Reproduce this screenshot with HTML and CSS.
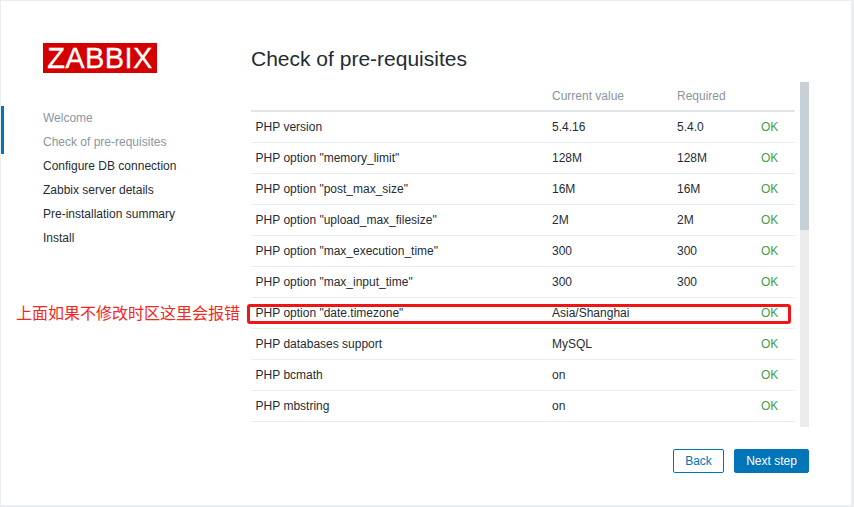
FILE: index.html
```html
<!DOCTYPE html>
<html lang="en">

<head>
    <meta charset="UTF-8">
    <meta name="viewport" content="width=device-width, initial-scale=1.0">
    <title>Zabbix - Check of pre-requisites</title>
    <link rel="stylesheet" href="styles.css">
</head>

<body>
    <div class="container">
        <div class="sidebar">
            <div class="logo">ZABBIX</div>
            <ul class="steps">
                <li class="done">Welcome</li>
                <li class="done">Check of pre-requisites</li>
                <li>Configure DB connection</li>
                <li>Zabbix server details</li>
                <li>Pre-installation summary</li>
                <li>Install</li>
            </ul>
        </div>
        <div class="content">
            <h1>Check of pre-requisites</h1>
            <div class="scroll-area">
                <table class="checks">
                    <thead>
                        <tr>
                            <th></th>
                            <th>Current value</th>
                            <th>Required</th>
                            <th></th>
                        </tr>
                    </thead>
                    <tbody>
                        <tr><td>PHP version</td><td>5.4.16</td><td>5.4.0</td><td class="ok">OK</td></tr>
                        <tr><td>PHP option "memory_limit"</td><td>128M</td><td>128M</td><td class="ok">OK</td></tr>
                        <tr><td>PHP option "post_max_size"</td><td>16M</td><td>16M</td><td class="ok">OK</td></tr>
                        <tr><td>PHP option "upload_max_filesize"</td><td>2M</td><td>2M</td><td class="ok">OK</td></tr>
                        <tr><td>PHP option "max_execution_time"</td><td>300</td><td>300</td><td class="ok">OK</td></tr>
                        <tr><td>PHP option "max_input_time"</td><td>300</td><td>300</td><td class="ok">OK</td></tr>
                        <tr><td>PHP option "date.timezone"</td><td>Asia/Shanghai</td><td></td><td class="ok">OK</td></tr>
                        <tr><td>PHP databases support</td><td>MySQL</td><td></td><td class="ok">OK</td></tr>
                        <tr><td>PHP bcmath</td><td>on</td><td></td><td class="ok">OK</td></tr>
                        <tr><td>PHP mbstring</td><td>on</td><td></td><td class="ok">OK</td></tr>
                    </tbody>
                </table>
                <div class="scrollbar">
                    <div class="thumb"></div>
                </div>
            </div>
            <div class="buttons">
                <button class="btn-alt">Back</button>
                <button class="btn-next">Next step</button>
            </div>
        </div>
        <div class="note">上面如果不修改时区这里会报错</div>
        <div class="note-box"></div>
    </div>
</body>

</html>
```

FILE: styles.css
```css
* {
    box-sizing: border-box;
}

html,
body {
    height: 100%;
}

body {
    margin: 0;
    padding: 1px 3px 2px 1px;
    background-color: #ebeef0;
    font-family: "Liberation Sans", Arial, sans-serif;
    font-size: 12px;
    color: #1f2c33;
}

.container {
    position: relative;
    display: flex;
    height: 504px;
    background: white;
    overflow: hidden;
}

.sidebar {
    width: 250px;
    padding-top: 42px;
}

.logo {
    width: 114px;
    height: 30px;
    margin-left: 42px;
    background: #d40000;
    color: white;
    font-size: 29px;
    line-height: 30px;
    text-align: center;
    letter-spacing: 0.4px;
    -webkit-text-stroke: 0.3px white;
}

.steps {
    list-style: none;
    margin: 33px 0 0;
    padding: 0;
}

.steps li {
    height: 24px;
    line-height: 24px;
    padding-left: 42px;
}

.steps .done {
    color: #8a96a0;
    border-left: 3px solid #0275b8;
    padding-left: 39px;
}

.content {
    width: 558px;
}

h1 {
    margin: 0;
    height: 81px;
    padding-top: 45px;
    font-size: 21px;
    line-height: 26px;
    font-weight: normal;
}

.scroll-area {
    display: flex;
    justify-content: space-between;
    height: 345px;
    overflow: hidden;
}

.checks {
    width: 544px;
    border-collapse: collapse;
    table-layout: fixed;
    align-self: flex-start;
}

.checks th {
    height: 29px;
    padding: 0 4px;
    text-align: left;
    font-weight: normal;
    color: #8a96a0;
    border-bottom: 2px solid #dfe4e7;
}

.checks th:first-child {
    width: 297px;
}

.checks th:nth-child(2) {
    width: 125px;
}

.checks th:nth-child(3) {
    width: 83px;
}

.checks td {
    height: 31px;
    padding: 0 4px;
    border-bottom: 1px solid #ebeef0;
}

.checks td:first-child {
    padding-left: 4.6px;
}

.checks .ok {
    color: #429e47;
    padding-left: 5px;
}

.scrollbar {
    width: 9px;
    height: 345px;
    margin-right: 0;
    background: #ebebeb;
}

.thumb {
    height: 148px;
    background: #c5d0d7;
}

.buttons {
    display: flex;
    justify-content: flex-end;
    gap: 10px;
    margin-top: 22px;
}

.buttons button {
    height: 24px;
    padding: 0;
    border-radius: 2px;
    font-family: inherit;
    font-size: 12px;
    cursor: pointer;
}

.btn-alt {
    width: 51px;
    background: white;
    color: #0275b8;
    border: 1px solid #0275b8;
}

.btn-next {
    width: 75px;
    background: #0275b8;
    color: white;
    border: 1px solid #0275b8;
}

.note {
    position: absolute;
    left: 15px;
    top: 300px;
    font-family: "Noto Sans CJK SC", sans-serif;
    font-size: 16px;
    line-height: 22px;
    color: #f5281e;
}

.note-box {
    position: absolute;
    left: 246px;
    top: 303px;
    width: 544px;
    height: 20px;
    border: 3px solid #f01414;
    border-radius: 3px;
}
```
